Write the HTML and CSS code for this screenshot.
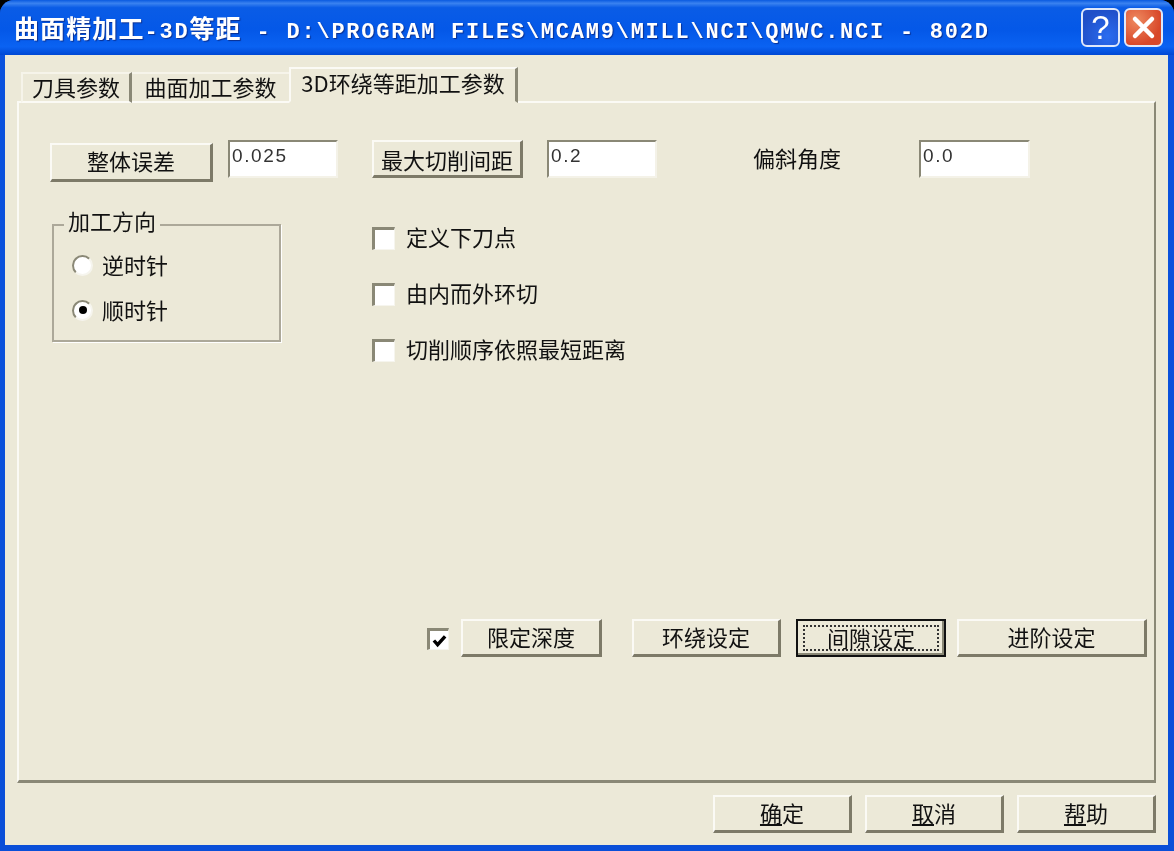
FILE: index.html

```html
<!DOCTYPE html>
<html lang="zh-CN">
<head>
  <meta charset="UTF-8" />
  <title>曲面精加工-3D等距</title>
  <link rel="stylesheet" href="styles.css">
</head>
<body>
  <div class="window">
    <div class="titlebar">
      <div class="title"><span class="cjk">曲面精加工</span>-3D<span class="cjk">等距</span> - D:\PROGRAM FILES\MCAM9\MILL\NCI\QMWC.NCI - 802D</div>
      <div class="caption help">?</div>
      <div class="caption close">
        <svg width="25" height="25" viewBox="0 0 25 25"><path d="M4 4 L21 21 M21 4 L4 21" stroke="#fff" stroke-width="4.5" stroke-linecap="round"/></svg>
      </div>
    </div>

    <div class="client">
      <div class="tabs">
        <div class="tab first">刀具参数</div>
        <div class="tab second">曲面加工参数</div>
        <div class="tab active">3D环绕等距加工参数</div>
      </div>

      <div class="panel">
        <div class="row-top">
          <button class="btn btn-tol">整体误差</button>
          <input class="field f-tol" type="text" value="0.025">
          <button class="btn btn-step">最大切削间距</button>
          <input class="field f-step" type="text" value="0.2">
          <div class="angle-label">偏斜角度</div>
          <input class="field f-angle" type="text" value="0.0">
        </div>

        <div class="row-mid">
          <fieldset class="group">
            <legend>加工方向</legend>
            <div class="radio-row"><span class="radio"></span>逆时针</div>
            <div class="radio-row"><span class="radio on"></span>顺时针</div>
          </fieldset>
          <div class="checks">
            <div class="check-row"><span class="check"></span>定义下刀点</div>
            <div class="check-row"><span class="check"></span>由内而外环切</div>
            <div class="check-row"><span class="check"></span>切削顺序依照最短距离</div>
          </div>
        </div>

        <div class="row-actions">
          <span class="check small">
            <svg width="15" height="15" viewBox="0 0 16 16"><path d="M2 8 L6 12.5 L14 3.5" fill="none" stroke="#000" stroke-width="3.6"/></svg>
          </span>
          <button class="btn a-depth">限定深度</button>
          <button class="btn a-loop">环绕设定</button>
          <button class="btn a-gap focused"><span class="dots">间隙设定</span></button>
          <button class="btn a-adv">进阶设定</button>
        </div>
      </div>

      <div class="footer">
        <button class="btn foot"><u>确</u>定</button>
        <button class="btn foot"><u>取</u>消</button>
        <button class="btn foot"><u>帮</u>助</button>
      </div>
    </div>
  </div>
</body>
</html>
```

FILE: styles.css

```css
* {
  box-sizing: border-box;
}
html, body {
  margin: 0;
  background-color: #000;
}
body {
  width: 1174px;
  height: 851px;
  overflow: hidden;
  font-family: "Noto Sans CJK SC", "Liberation Sans", sans-serif;
  font-size: 22px;
  color: #111;
}
.window {
  width: 1174px;
  height: 851px;
  display: flex;
  flex-direction: column;
  padding: 0 6px 6px 5px;
  border-radius: 14px 14px 0 0;
  background: linear-gradient(#0a52de, #0a4fd8);
  overflow: hidden;
  filter: blur(0.4px);
}
.titlebar {
  height: 55px;
  margin: 0 -6px 0 -5px;
  padding: 0 11px 0 14px;
  display: flex;
  align-items: center;
  gap: 4px;
  background: linear-gradient(#0a5ae0 0, #3a82f0 6%, #0a5ce6 14%, #0458e8 55%, #0a62f2 85%, #0048d4 100%);
}
.title {
  flex: 1;
  padding-bottom: 2px;
  color: #fff;
  font-family: "Liberation Mono", monospace;
  font-size: 22px;
  font-weight: bold;
  letter-spacing: 1.76px;
  white-space: pre;
  text-shadow: 1px 1px 1px #0a2f90;
}
.title .cjk {
  font-family: "Noto Sans CJK SC", sans-serif;
  font-size: 25px;
  letter-spacing: 1.1px;
}
.caption {
  width: 39px;
  height: 39px;
  display: flex;
  align-items: center;
  justify-content: center;
  border: 2px solid #dfe8fa;
  border-radius: 6px;
}
.help {
  background: radial-gradient(circle at 70% 75%, #2a6cf0, #1f4fc8 75%);
  color: #fff;
  font-family: "Liberation Sans", sans-serif;
  font-size: 33px;
  line-height: 1;
}
.close {
  background: radial-gradient(circle at 30% 30%, #ee8a60, #d8482a 70%);
}

.client {
  flex: 1;
  display: flex;
  flex-direction: column;
  padding: 12px;
  background-color: #ece9d8;
}
.tabs {
  height: 36px;
  display: flex;
  align-items: flex-end;
  padding-left: 4px;
  position: relative;
  z-index: 1;
  margin-bottom: -2px;
}
.tab {
  height: 31px;
  display: flex;
  align-items: center;
  justify-content: center;
  border-top: 2px solid #f6f4ea;
  border-left: 2px solid #f6f4ea;
  border-bottom: 2px solid #fbfaf5;
  white-space: nowrap;
  line-height: 1;
  padding-bottom: 4px;
}
.tab.first {
  width: 111px;
  border-right: 3px solid #8a8876;
}
.tab.second {
  width: 157px;
  border-left: none;
}
.tab.active {
  width: 229px;
  height: 36px;
  padding-bottom: 6px;
  border-right: 3px solid #8a8876;
  border-top-color: #fbfaf5;
  border-left-color: #fbfaf5;
  border-bottom-color: #ece9d8;
  background-color: #ece9d8;
}
.panel {
  flex: 1;
  display: flex;
  flex-direction: column;
  border: 2px solid;
  border-color: #fbfaf5 #8a8876 #8a8876 #fbfaf5;
  border-bottom-width: 3px;
  padding: 37px 7px 0 31px;
}

.btn {
  height: 38px;
  padding: 0 0 4px;
  background-color: #ece9d8;
  color: #111;
  font-family: "Noto Sans CJK SC", sans-serif;
  font-size: 22px;
  line-height: 1;
  border: 2px solid;
  border-color: #fbfaf5 #7d7a68 #7d7a68 #fbfaf5;
  border-right-width: 3px;
  border-bottom-width: 3px;
}
.field {
  width: 110px;
  height: 38px;
  padding: 0 0 6px 2px;
  background-color: #fff;
  border: 2px solid;
  border-color: #8a8876 #f4f2e8 #f4f2e8 #8a8876;
  font-family: "Liberation Sans", sans-serif;
  font-size: 19px;
  letter-spacing: 1.6px;
  color: #333;
  outline: none;
}

.row-top {
  display: flex;
  align-items: flex-start;
}
.btn-tol {
  width: 163px;
  margin-top: 3px;
  height: 39px;
}
.f-tol {
  margin-left: 15px;
}
.btn-step {
  width: 151px;
  margin-left: 34px;
  padding-bottom: 0;
}
.f-step {
  margin-left: 24px;
}
.angle-label {
  width: 90px;
  margin-left: 96px;
  line-height: 38px;
  margin-top: -2px;
}
.f-angle {
  width: 111px;
  margin-left: 76px;
}

.row-mid {
  display: flex;
  align-items: flex-start;
  margin-top: 26px;
}
.group {
  width: 229px;
  height: 134px;
  margin: 0 0 0 2px;
  padding: 0 0 0 18px;
  border: 2px solid #aca899;
  box-shadow: 1px 1px 0 #fff;
}
.group legend {
  margin-left: -8px;
  padding: 0 4px 10px;
  line-height: 24px;
}
.radio-row {
  height: 45px;
  padding-bottom: 2px;
  display: flex;
  align-items: center;
  gap: 9px;
  line-height: 1;
}
.radio {
  width: 21px;
  height: 21px;
  margin-top: 3px;
  display: flex;
  align-items: center;
  justify-content: center;
  border-radius: 50%;
  border: 2px solid;
  border-color: #8a8876 #f6f5ee #f6f5ee #8a8876;
  background-color: #fff;
}
.radio.on::after {
  content: "";
  width: 8px;
  height: 8px;
  border-radius: 50%;
  background-color: #000;
}

.checks {
  margin-left: 91px;
  margin-top: 0;
}
.check-row {
  height: 56px;
  display: flex;
  align-items: center;
  gap: 11px;
  line-height: 1;
}
.check {
  width: 23px;
  height: 23px;
  margin-top: 4px;
  display: flex;
  align-items: center;
  justify-content: center;
  background-color: #fff;
  border: 2px solid;
  border-width: 3px 1px 1px 3px;
  border-color: #8a8876 #f6f5ee #f6f5ee #8a8876;
}
.check.small {
  width: 22px;
  height: 22px;
  margin: 9px 12px 0 0;
  align-self: flex-start;
}

.row-actions {
  margin-top: auto;
  margin-bottom: 123px;
  display: flex;
  align-items: center;
  justify-content: flex-end;
}
.a-depth {
  width: 141px;
}
.a-loop {
  width: 149px;
  margin-left: 30px;
}
.a-gap {
  width: 150px;
  margin-left: 15px;
}
.a-adv {
  width: 190px;
  margin-left: 11px;
}
.focused {
  border: 2px solid #111;
  padding: 4px 5px;
  box-shadow: inset -2px -2px 0 #8a8876;
}
.dots {
  height: 100%;
  display: flex;
  align-items: center;
  justify-content: center;
  padding-bottom: 3px;
  border: 2px dotted #333;
}

.footer {
  display: flex;
  justify-content: flex-end;
  gap: 13px;
  margin-top: 12px;
}
.foot {
  width: 139px;
}
```
